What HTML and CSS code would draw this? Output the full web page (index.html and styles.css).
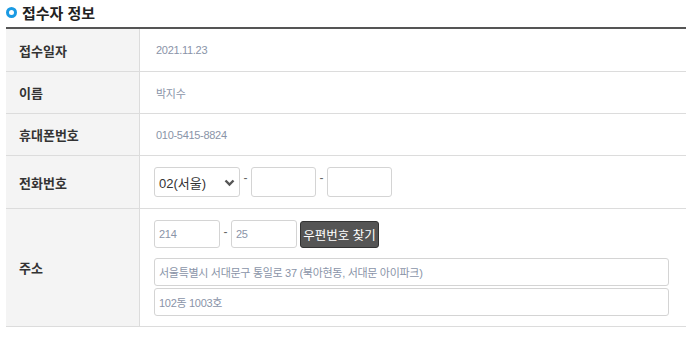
FILE: index.html
```html
<!DOCTYPE html>
<html lang="ko">
<head>
<meta charset="utf-8">
<link rel="stylesheet" href="styles.css">
</head>
<body>
<div class="wrap">
  <h2 class="title"><span class="dot"></span>접수자 정보</h2>
  <div class="table">
    <div class="row r1">
      <div class="th">접수일자</div>
      <div class="td"><span class="masked">2021.11.23</span></div>
    </div>
    <div class="row r2">
      <div class="th">이름</div>
      <div class="td"><span class="masked">박지수</span></div>
    </div>
    <div class="row r3">
      <div class="th">휴대폰번호</div>
      <div class="td"><span class="masked">010-5415-8824</span></div>
    </div>
    <div class="row r4">
      <div class="th">전화번호</div>
      <div class="td">
        <div class="line">
          <div class="sel">
            <span class="sel-text">02(서울)</span>
            <svg class="chev" width="11" height="8" viewBox="0 0 11 8"><path d="M1.5 1.5 L5.5 5.5 L9.5 1.5" fill="none" stroke="#555" stroke-width="2.4"/></svg>
          </div>
          <span class="dash">-</span>
          <div class="inp w65"></div>
          <span class="dash">-</span>
          <div class="inp w65"></div>
        </div>
      </div>
    </div>
    <div class="row r5">
      <div class="th">주소</div>
      <div class="td addr">
        <div class="line">
          <div class="inp w66 tall"><span class="masked sm">214</span></div>
          <span class="dash">-</span>
          <div class="inp w66 tall"><span class="masked sm">25</span></div>
          <button class="btn">우편번호 찾기</button>
        </div>
        <div class="inp full tall"><span class="masked sm">서울특별시 서대문구 통일로 37 (북아현동, 서대문 아이파크)</span></div>
        <div class="inp full tall"><span class="masked sm">102동 1003호</span></div>
      </div>
    </div>
  </div>
</div>
</body>
</html>
```

FILE: styles.css
```css
* { box-sizing: border-box; }
body {
  margin: 0;
  background: #fff;
  font-family: "Liberation Sans", "Noto Sans CJK KR", sans-serif;
  color: #333;
}
.wrap {
  width: 686px;
  padding-left: 6px;
}
.title {
  margin: 0;
  height: 27px;
  display: flex;
  align-items: center;
  gap: 5px;
  font-size: 15px;
  font-weight: bold;
  color: #222;
  padding-bottom: 3px;
}
.dot {
  width: 11px;
  height: 11px;
  border: 3px solid #1a9ae3;
  border-radius: 50%;
  flex: none;
}
.table {
  border-top: 2px solid #555;
}
.row {
  display: grid;
  grid-template-columns: 134px 1fr;
  border-bottom: 1px solid #dcdcdc;
}
.r1 { height: 43px; }
.r2, .r3 { height: 42px; }
.r4 { height: 53px; }
.r5 { height: 118px; }
.th {
  background: #f4f4f4;
  border-right: 1px solid #dcdcdc;
  display: flex;
  align-items: center;
  padding-left: 13px;
  font-size: 13px;
  font-weight: bold;
  color: #333;
}
.td {
  display: flex;
  align-items: center;
  padding-left: 14px;
  font-size: 12px;
}
.masked {
  color: #8a94a8;
  font-size: 11px;
  padding-left: 2px;
  letter-spacing: -0.3px;
}
.masked.sm { padding-left: 0; }
.line {
  display: flex;
  align-items: center;
}
.sel {
  position: relative;
  width: 86px;
  height: 30px;
  border: 1px solid #d4d4d4;
  border-radius: 3px;
  display: flex;
  align-items: center;
  padding-left: 4px;
  font-size: 13px;
  color: #333;
}
.chev {
  position: absolute;
  right: 4px;
  top: 11px;
}
.dash {
  width: 11px;
  text-align: center;
  font-size: 12px;
  color: #666;
  margin-top: -8px;
}
.inp {
  height: 30px;
  border: 1px solid #d4d4d4;
  border-radius: 3px;
  display: flex;
  align-items: center;
  padding-left: 4px;
}
.w65 { width: 65px; }
.w66 { width: 66px; }
.tall { height: 28px; }
.full { width: 515px; }
.addr {
  flex-direction: column;
  align-items: flex-start;
  justify-content: flex-start;
  padding-top: 11px;
  gap: 2px;
}
.addr .line { margin-bottom: 8px; }
.addr .dash { width: 11px; margin-top: -4px; }
.btn {
  margin-left: 3px;
  height: 27px;
  width: 79px;
  padding: 0;
  background: #555;
  border: 1px solid #333;
  border-radius: 3px;
  color: #fff;
  font-family: "Liberation Sans", "Noto Sans CJK KR", sans-serif;
  font-size: 12.5px;
}
```
